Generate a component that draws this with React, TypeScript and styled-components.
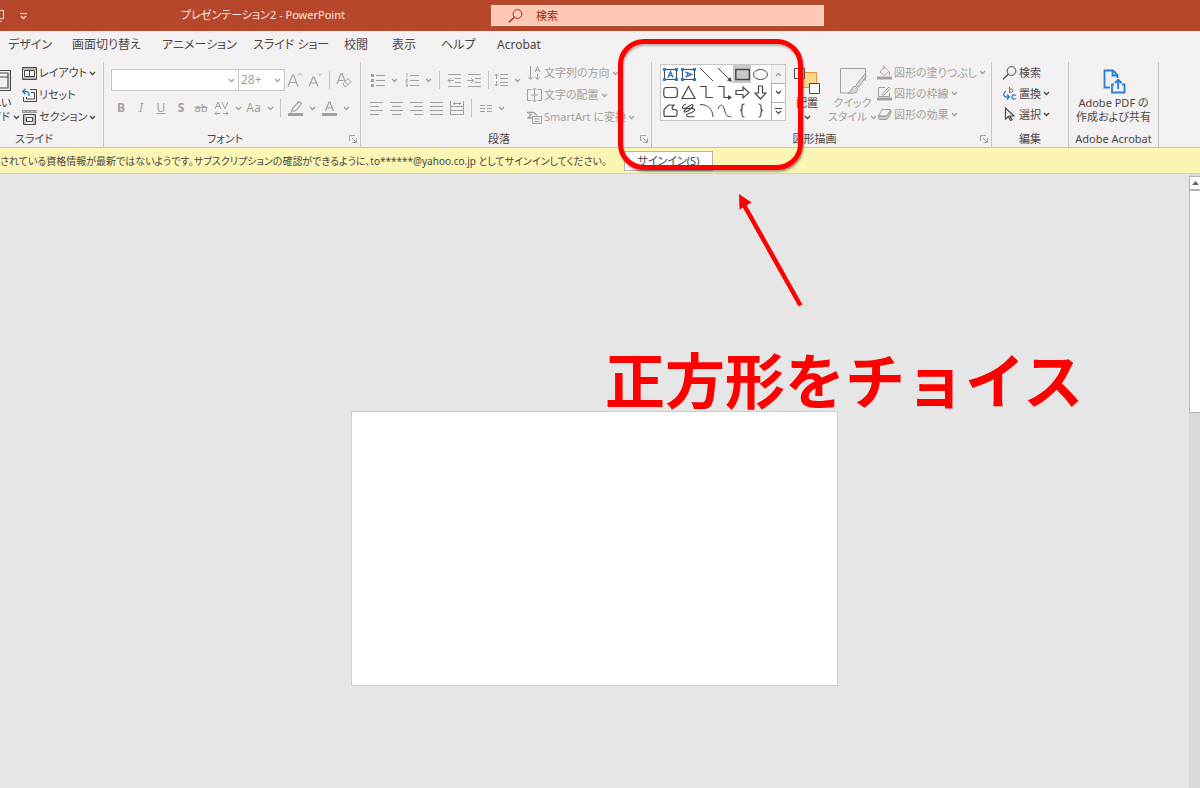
import React from "react";
import styled, { createGlobalStyle } from "styled-components";

const c = {
  brand: "#b7472a",
  ribbon: "#f3f1f1",
  ink: "#4a4846",
  off: "#a3a1a0",
  line: "#c8c6c4",
  blue: "#2b7cd3",
  red: "#ff0000",
};

const GlobalStyle = createGlobalStyle`
  *, *::before, *::after { box-sizing: border-box; }
  html, body { margin: 0; }
  body {
    font-family: "Noto Sans", "Noto Sans CJK JP", sans-serif;
    font-size: 11px;
    line-height: 14px;
    color: ${c.ink};
    font-feature-settings: "palt";
    overflow: hidden;
  }
  button, input, select { font: inherit; font-feature-settings: inherit; color: inherit; }
  svg { display: block; flex: none; }
`;

const Page = styled.div`
  position: relative;
  display: flex;
  flex-direction: column;
  min-height: 100vh;
`;

const TitleBar = styled.header`
  display: flex;
  align-items: center;
  height: 31px;
  background: ${c.brand};
  color: #fbe9e4;
`;
const QuickAccess = styled.div`
  display: flex;
  align-items: center;
  gap: 16px;
  width: 181px;
`;
const Title = styled.h1`
  width: 310px;
  margin: 0;
  padding-bottom: 2px;
  font-size: 11px;
  font-weight: 400;
  line-height: 14px;
  white-space: nowrap;
`;
const Search = styled.label`
  display: flex;
  align-items: center;
  gap: 13px;
  flex: 0 1 333px;
  height: 21px;
  padding-left: 16px;
  background: #fdc8b4;
  border: 1px solid #fbd9cd;
  color: #8f2f26;
`;
const SearchInput = styled.input`
  flex: 1;
  min-width: 0;
  padding: 0;
  border: 0;
  outline: 0;
  background: transparent;
  &::placeholder { color: #8f2f26; opacity: 1; }
`;

const Tabs = styled.nav`
  display: grid;
  grid-template-columns: 64px 90px 91px 91px 48px 49px 56px auto;
  justify-content: start;
  height: 28px;
  padding-left: 8px;
  background: ${c.ribbon};
`;
const Tab = styled.button`
  padding: 0;
  border: 0;
  background: none;
  font-size: 12px;
  text-align: left;
  white-space: nowrap;
`;

const Ribbon = styled.section`
  display: flex;
  padding-top: 3px;
  background: ${c.ribbon};
  border-bottom: 1px solid ${c.line};
`;
const Group = styled.div<{ $w: number }>`
  display: flex;
  flex-direction: column;
  gap: 3px;
  width: ${(p) => p.$w}px;
  border-right: 1px solid ${c.line};
`;
const GroupBody = styled.div<{ $pad?: number; $gap?: number; $center?: boolean }>`
  display: flex;
  gap: ${(p) => p.$gap ?? 0}px;
  height: 66px;
  padding-left: ${(p) => p.$pad ?? 0}px;
  justify-content: ${(p) => (p.$center ? "center" : "flex-start")};
`;
const GroupFooter = styled.div<{ $shift?: number }>`
  display: flex;
  align-items: center;
  height: 16px;
  padding-right: ${(p) => p.$shift ?? 0}px;
  white-space: nowrap;
`;
const GroupName = styled.span`
  flex: 1;
  text-align: center;
`;
const Launcher = styled.button`
  padding: 0 3px;
  border: 0;
  background: none;
  color: ${c.off};
`;

const Stack = styled.div<{ $row: number }>`
  display: grid;
  grid-auto-rows: ${(p) => p.$row}px;
  align-content: start;
  justify-items: start;
`;
const Command = styled.button<{ $off?: boolean }>`
  display: flex;
  align-items: center;
  gap: 2px;
  padding: 0;
  border: 0;
  background: none;
  color: ${(p) => (p.$off ? c.off : c.ink)};
  white-space: nowrap;
`;
const BigCommand = styled.button<{ $off?: boolean; $w: number }>`
  display: flex;
  flex-direction: column;
  align-items: center;
  width: ${(p) => p.$w}px;
  padding: 4px 0 0;
  border: 0;
  background: none;
  color: ${(p) => (p.$off ? c.off : c.ink)};
  white-space: nowrap;
`;
const BigIcon = styled.span`
  display: grid;
  place-items: center;
  height: 30px;
`;
const BigLine = styled.span`
  display: flex;
  align-items: center;
  gap: 3px;
  height: 14px;
`;
const Clipped = styled.div`
  display: flex;
  justify-content: flex-end;
  width: 20px;
  margin-right: 2px;
  overflow: hidden;
`;

const ToolRows = styled.div`
  display: flex;
  flex-direction: column;
  gap: 6px;
  padding-top: 7px;
`;
const ToolRow = styled.div`
  display: flex;
  align-items: center;
  height: 22px;
`;
const Tool = styled.button<{ $w?: number; $size?: number }>`
  display: flex;
  align-items: center;
  justify-content: center;
  gap: 6px;
  width: ${(p) => p.$w ?? 20}px;
  height: 22px;
  padding: 0;
  border: 0;
  background: none;
  color: ${c.off};
  font-size: ${(p) => p.$size ?? 12}px;
  line-height: 16px;
`;
const Rule = styled.span`
  width: 1px;
  height: 18px;
  margin: 0 4px;
  background: ${c.line};
`;
const SelectBox = styled.span<{ $w: number }>`
  display: grid;
  align-items: center;
  width: ${(p) => p.$w}px;
  height: 22px;
  margin-right: -1px;
  background: #fff;
  border: 1px solid ${c.line};
  color: ${c.off};
  & > * { grid-area: 1 / 1; }
  & > svg { justify-self: end; margin-right: 3px; pointer-events: none; }
`;
const Select = styled.select`
  appearance: none;
  width: 100%;
  padding: 0 2px;
  border: 0;
  outline: 0;
  background: transparent;
  font-size: 12px;
`;

const Gallery = styled.div`
  display: flex;
  height: 57px;
  margin-top: 2px;
  background: #fff;
  border: 1px solid ${c.line};
`;
const ShapeGrid = styled.div`
  display: grid;
  grid-template-columns: repeat(6, 18px);
  grid-template-rows: repeat(3, 18px);
  padding-right: 2px;
`;
const Shape = styled.button<{ $on?: boolean }>`
  display: grid;
  place-items: center;
  padding: 0;
  border: 0;
  background: ${(p) => (p.$on ? "#cbc9c8" : "none")};
`;
const Pager = styled.div`
  display: grid;
  grid-template-rows: repeat(3, 1fr);
  width: 14px;
`;
const PagerButton = styled.button<{ $off?: boolean }>`
  display: grid;
  place-items: center;
  padding: 0;
  border: 0;
  border-left: 1px solid ${(p) => (p.$off ? "#dedcda" : "#b0aeac")};
  border-top: ${(p) => (p.$off ? "0" : "1px solid #b0aeac")};
  background: ${(p) => (p.$off ? c.ribbon : "#fff")};
  color: ${(p) => (p.$off ? c.off : c.ink)};
`;

const MessageBar = styled.section`
  display: flex;
  align-items: center;
  height: 26px;
  background: #fcf6b4;
  border-bottom: 1px solid #dcd79c;
  white-space: nowrap;
`;
const Message = styled.p`
  width: 624px;
  margin: 0;
  font-size: 10px;
`;
const SignIn = styled.button`
  width: 89px;
  height: 20px;
  padding: 0;
  background: #fdfdfd;
  border: 1px solid #b5b3b1;
`;

const Workspace = styled.main`
  display: flex;
  flex: 1;
  background: #e6e6e6;
`;
const Canvas = styled.div`
  flex: 1;
  padding-top: 237px;
`;
const Slide = styled.div`
  width: 41%;
  aspect-ratio: 487 / 275;
  margin: 0 auto;
  background: #fff;
  border: 1px solid #cfcfcf;
`;
const ScrollBar = styled.div`
  width: 11px;
  padding-top: 2px;
  background: #dadada;
`;
const ScrollUp = styled.button`
  display: grid;
  place-items: center;
  width: 100%;
  height: 14px;
  padding: 0;
  background: #fff;
  border: 1px solid #b4b4b4;
  border-right: 0;
`;
const ScrollThumb = styled.div`
  height: 223px;
  background: #fff;
  border: 1px solid #b4b4b4;
  border-right: 0;
`;

const Highlight = styled.div`
  position: absolute;
  left: 618px;
  top: 39px;
  width: 185px;
  height: 131px;
  border: 5px solid ${c.red};
  border-radius: 26px;
  box-shadow: 1px 2px 2px rgba(0, 0, 0, 0.35), inset 1px 2px 2px rgba(0, 0, 0, 0.25);
  pointer-events: none;
`;
const Arrow = styled.svg`
  position: absolute;
  left: 736px;
  top: 192px;
  pointer-events: none;
`;
const Caption = styled.p`
  position: absolute;
  left: 605px;
  top: 348px;
  margin: 0;
  color: ${c.red};
  font-family: "Noto Sans CJK JP", sans-serif;
  font-feature-settings: normal;
  font-size: 60px;
  font-weight: 700;
  line-height: 60px;
  white-space: nowrap;
`;

type IconProps = { w: number; h: number; children: React.ReactNode };
const Icon = ({ w, h, children }: IconProps) => (
  <svg width={w} height={h} viewBox={`0 0 ${w} ${h}`} fill="none" stroke="currentColor" aria-hidden="true">
    {children}
  </svg>
);

const Chevron = ({ up }: { up?: boolean }) => (
  <Icon w={7} h={5}>
    <path d={up ? "M1 4l2.500-2.500L6 4" : "M1 1l2.500 2.500L6 1"} strokeWidth="1.300" />
  </Icon>
);
const LauncherIcon = () => (
  <Icon w={8} h={8}>
    <path d="M.5 6V.5H6M3 3l4 4M7.500 3.500v4h-4" />
  </Icon>
);
const SearchIcon = () => (
  <Icon w={15} h={14}>
    <circle cx="9.500" cy="5" r="4.400" />
    <path d="M6.300 8.200L1 13.200" strokeWidth="1.300" />
  </Icon>
);
const LayoutIcon = () => (
  <Icon w={15} h={13}>
    <path d="M.5.5h14v12H.5z" />
    <path d="M2.500 3.500h10v6h-10zM7.500 3.500v6" />
    <path d="M1 2h13M1 11h13" strokeOpacity=".35" strokeWidth="2" />
  </Icon>
);
const ResetIcon = () => (
  <Icon w={15} h={14}>
    <path d="M8 1.500h6.500v12H1.500V9M9 4.500h3.500v6.500h-8V9" />
    <path d="M.8 3.500h3.500a2.500 2.500 0 0 1 2.500 3V8M3.500.8L.8 3.500l2.700 2.700" stroke={c.blue} strokeWidth="1.400" />
  </Icon>
);
const SectionIcon = () => (
  <Icon w={15} h={15}>
    <path d="M0 1.500h15" stroke="#9b9997" strokeWidth="3" />
    <path d="M1 1.500h14" stroke="#f0c878" strokeDasharray="2 2" />
    <path d="M1.500 4.500h12v10h-12zM4.500 7.500h6v4h-6z" />
    <path d="M3 5v9M12 5v9" strokeOpacity=".3" strokeWidth="2" />
  </Icon>
);
const NewSlideIcon = () => (
  <Icon w={30} h={22}>
    <path d="M.5.5h29v20H.5zM3 3h24v15H3zM3 7h24" strokeWidth="1.200" />
  </Icon>
);
const lines = (items: [number, number, number][]) => items.map(([x1, x2, y]) => `M${x1} ${y}H${x2}`).join("");
const LinesIcon = ({ items, w = 14, h = 14, extra }: { items: [number, number, number][]; w?: number; h?: number; extra?: React.ReactNode }) => (
  <Icon w={w} h={h}>
    <path d={lines(items)} />
    {extra}
  </Icon>
);

const shapes: { name: string; on?: boolean; art: React.ReactNode }[] = [
  {
    name: "テキスト ボックス",
    art: (
      <>
        <path d="M1.500 2.500h12v10h-12z" />
        <path d="M5 10.500L7.500 4.500 10 10.500M6 8.500h3" stroke={c.blue} strokeWidth="1.400" />
        <path d="M0 1h3v3H0zM12 1h3v3h-3zM0 11h3v3H0zM12 11h3v3h-3z" fill={c.blue} stroke="none" />
      </>
    ),
  },
  {
    name: "縦書きテキスト ボックス",
    art: (
      <>
        <path d="M1.500 2.500h12v10h-12z" />
        <path d="M4.500 5L10.500 7.500 4.500 10M6.500 6v3" stroke={c.blue} strokeWidth="1.400" />
        <path d="M0 1h3v3H0zM12 1h3v3h-3zM0 11h3v3H0zM12 11h3v3h-3z" fill={c.blue} stroke="none" />
      </>
    ),
  },
  { name: "線", art: <path d="M1 1l13 13" /> },
  {
    name: "線矢印",
    art: (
      <>
        <path d="M1 1l12 12" />
        <path d="M15 15l-5-1.500 3.500-3.500z" fill="currentColor" stroke="none" />
      </>
    ),
  },
  { name: "正方形/長方形", on: true, art: <path d="M.8 2.500h13.500v10H.8z" strokeWidth="1.400" /> },
  { name: "楕円", art: <ellipse cx="7.500" cy="7.500" rx="7" ry="5" /> },
  { name: "四角形: 角を丸くする", art: <rect x=".8" y="2.500" width="13.500" height="10" rx="2.500" strokeWidth="1.200" /> },
  { name: "二等辺三角形", art: <path d="M7.500 1.500L14 13.500H1z" strokeWidth="1.200" /> },
  { name: "コネクタ: カギ線", art: <path d="M1 1.500h6v11h7" strokeWidth="1.200" /> },
  {
    name: "コネクタ: カギ線矢印",
    art: (
      <>
        <path d="M1 1.500h6v11h5" strokeWidth="1.200" />
        <path d="M15 12.500L11 10v5z" fill="currentColor" stroke="none" />
      </>
    ),
  },
  { name: "矢印: 右", art: <path d="M1 5.500h7V2l6 5.500L8 13V9.500H1z" strokeWidth="1.200" /> },
  { name: "矢印: 下", art: <path d="M5.500 1v7H2l5.500 6L13 8H9.500V1z" strokeWidth="1.200" /> },
  {
    name: "フリーフォーム: 図形",
    art: <path d="M1 12V6.500L5.500 2H11C9.500 3.500 8.500 5 9.500 6s3 .3 4.500 1.500v4c0 1-.7 1.800-1.800 1.800H1.800c-.5 0-.8-.5-.8-1.300z" strokeWidth="1.200" />,
  },
  {
    name: "フリーフォーム: フリーハンド",
    art: <path d="M5 1C2 2 .5 4.500 2 5.500S8 3 10 2s3 .5 1 2.500-5 4.500-7 4.500-.5-3 3-3.500 8 0 6 2.500-7 2-7.500 4 4.500 2 8 1.500" strokeWidth="1.100" />,
  },
  { name: "円弧", art: <path d="M1 1.500c8 0 12.500 4.500 13 12.500" /> },
  { name: "曲線", art: <path d="M1 6C3 .5 6 1 7.500 7s3 7 6.500 6.500" /> },
  { name: "左中かっこ", art: <path d="M9.500 1C7 1 7 2 7 4v1.500c0 1.200-.8 2-2 2 1.200 0 2 .8 2 2V11c0 2 0 3 2.500 3" strokeWidth="1.200" /> },
  { name: "右中かっこ", art: <path d="M5.500 1C8 1 8 2 8 4v1.500c0 1.200.8 2 2 2-1.200 0-2 .8-2 2V11c0 2 0 3-2.500 3" strokeWidth="1.200" /> },
];

const tabs = ["デザイン", "画面切り替え", "アニメーション", "スライド ショー", "校閲", "表示", "ヘルプ", "Acrobat"];

const Footer = ({ name, launcher, shift }: { name: string; launcher?: boolean; shift?: number }) => (
  <GroupFooter $shift={shift}>
    <GroupName>{name}</GroupName>
    {launcher && (
      <Launcher aria-label={`${name}の詳細`}>
        <LauncherIcon />
      </Launcher>
    )}
  </GroupFooter>
);

const SlideGroup = () => (
  <Group $w={104}>
    <GroupBody>
      <Clipped>
        <BigCommand $w={52} aria-label="新しいスライド">
          <BigIcon><NewSlideIcon /></BigIcon>
          <BigLine>新しい</BigLine>
          <BigLine>スライド<Chevron /></BigLine>
        </BigCommand>
      </Clipped>
      <Stack $row={22}>
        <Command><LayoutIcon />レイアウト<Chevron /></Command>
        <Command><ResetIcon />リセット</Command>
        <Command><SectionIcon />セクション<Chevron /></Command>
      </Stack>
    </GroupBody>
    <Footer name="スライド" shift={35} />
  </Group>
);

const FontGroup = () => (
  <Group $w={257}>
    <GroupBody $pad={7}>
      <ToolRows>
        <ToolRow>
          <SelectBox $w={128}>
            <Select aria-label="フォント"><option /></Select>
            <Chevron />
          </SelectBox>
          <SelectBox $w={47}>
            <Select aria-label="フォント サイズ"><option>28+</option></Select>
            <Chevron />
          </SelectBox>
          <Tool $w={21} aria-label="フォント サイズの拡大">
            <Icon w={16} h={16}><path d="M1 14.500L5.500 3h1L11 14.500M2.500 10.500h7" strokeWidth="1.200" /><path d="M11 3.500l2-2 2 2" /></Icon>
          </Tool>
          <Tool $w={20} aria-label="フォント サイズの縮小">
            <Icon w={16} h={16}><path d="M2 14.500L6 5h1l4 9.500M3.500 11h6" strokeWidth="1.200" /><path d="M11 1.500l2 2 2-2" /></Icon>
          </Tool>
          <Rule />
          <Tool $w={20} aria-label="書式のクリア">
            <Icon w={16} h={16}><path d="M1 12L5 1.500h1L9 9M2.500 8.500h5" strokeWidth="1.200" /><path d="M7 11.500l5-5 3 3-5 5H8.500zM9 9.500l3 3" /></Icon>
          </Tool>
        </ToolRow>
        <ToolRow>
          <Tool aria-label="太字"><b>B</b></Tool>
          <Tool aria-label="斜体"><i>I</i></Tool>
          <Tool aria-label="下線"><u>U</u></Tool>
          <Tool aria-label="文字の影"><b>S</b></Tool>
          <Tool aria-label="取り消し線" $size={11}><s>ab</s></Tool>
          <Tool $w={33} aria-label="文字の間隔">
            <Icon w={15} h={15}>
              <path d="M1 8l3-7 3 7M2 5.500h4M8 1l3 7 3-7" />
              <path d="M1 12.500h5M9 12.500h5M3 10.500l-2 2 2 2M12 10.500l2 2-2 2" />
            </Icon>
            <Chevron />
          </Tool>
          <Tool $w={32}><span>Aa</span><Chevron /></Tool>
          <Rule />
          <Tool $w={34} aria-label="蛍光ペンの色">
            <Icon w={15} h={16}>
              <path d="M4.500 8.500L11 1.500l2.500 2L7.500 11H4l-1 1.500z" strokeWidth="1.200" />
              <path d="M0 14.500h15" strokeWidth="3" />
            </Icon>
            <Chevron />
          </Tool>
          <Tool $w={34} aria-label="フォントの色">
            <Icon w={15} h={16}>
              <path d="M3.500 11l3.500-9h1l3.500 9M5 8h5" strokeWidth="1.200" />
              <path d="M0 14.500h15" strokeWidth="3" />
            </Icon>
            <Chevron />
          </Tool>
        </ToolRow>
      </ToolRows>
    </GroupBody>
    <Footer name="フォント" launcher />
  </Group>
);

const ParagraphGroup = () => (
  <Group $w={291}>
    <GroupBody $pad={6} $gap={6}>
      <ToolRows>
        <ToolRow>
          <Tool $w={34} aria-label="箇条書き">
            <LinesIcon items={[[5, 14, 2.5], [5, 14, 7.5], [5, 14, 12.5]]} extra={<path d="M0 2.500h3M0 7.500h3M0 12.500h3" strokeWidth="3" />} />
            <Chevron />
          </Tool>
          <Tool $w={34} aria-label="段落番号">
            <LinesIcon items={[[5, 14, 2.5], [5, 14, 7.5], [5, 14, 12.5]]} extra={<path d="M1 .5h1V4M.5 6h2v1.500H1V9h2M.5 11h2v3h-2M1 12.500h1" strokeWidth=".8" />} />
            <Chevron />
          </Tool>
          <Rule />
          <Tool aria-label="インデントを減らす">
            <LinesIcon items={[[1, 14, 1.5], [8, 14, 5.5], [8, 14, 9.5], [1, 14, 13.5]]} extra={<path d="M1 7.500h6M3.500 5L1 7.500 3.500 10" />} />
          </Tool>
          <Tool aria-label="インデントを増やす">
            <LinesIcon items={[[1, 14, 1.5], [8, 14, 5.5], [8, 14, 9.5], [1, 14, 13.5]]} extra={<path d="M0 7.500h6M4 5l2.500 2.500L4 10" />} />
          </Tool>
          <Rule />
          <Tool $w={28} aria-label="行間">
            <LinesIcon items={[[6, 14, 1.5], [6, 14, 5.5], [6, 14, 9.5], [6, 14, 12.5]]} extra={<path d="M2.500 1v5M2.500 8v5M.5 3l2-2 2 2M.5 11l2 2 2-2" />} />
            <Chevron />
          </Tool>
        </ToolRow>
        <ToolRow>
          <Tool aria-label="左揃え"><LinesIcon items={[[0, 13, 1.5], [0, 9, 5.5], [0, 13, 9.5], [0, 9, 13.5]]} /></Tool>
          <Tool aria-label="中央揃え"><LinesIcon items={[[0, 13, 1.5], [2, 11, 5.5], [0, 13, 9.5], [2, 11, 13.5]]} /></Tool>
          <Tool aria-label="右揃え"><LinesIcon items={[[0, 13, 1.5], [4, 13, 5.5], [0, 13, 9.5], [4, 13, 13.5]]} /></Tool>
          <Tool aria-label="両端揃え"><LinesIcon items={[[0, 13, 1.5], [0, 13, 5.5], [0, 13, 9.5], [0, 13, 13.5]]} /></Tool>
          <Tool aria-label="均等割り付け">
            <LinesIcon items={[[3, 11, 2.5], [1, 13, 5.5], [1, 13, 9.5], [0, 14, 13.5]]} extra={<path d="M.5 0v14M13.500 0v14M4.500 1v3M9.500 1v3" />} />
          </Tool>
          <Rule />
          <Tool $w={32} aria-label="段組み">
            <LinesIcon w={12} items={[[0, 5, 4.5], [7, 12, 4.5], [0, 5, 7.5], [7, 12, 7.5], [0, 5, 10.5], [7, 12, 10.5]]} />
            <Chevron />
          </Tool>
        </ToolRow>
      </ToolRows>
      <Stack $row={22}>
        <Command $off>
          <Icon w={15} h={15}><path d="M3.500 0v13M1 11l2.500 2.500L6 11M8 6l2.500-5.500L13 6M9 4h3M10.500 8v5.500M8 11l2.500 2.500L13 11" /></Icon>
          文字列の方向<Chevron />
        </Command>
        <Command $off>
          <Icon w={15} h={15}><path d="M4 1.500H.5v11H4M11 1.500h3.500v11H11M7.500 0v14M4 7h7M5.500 2l2-2 2 2M5.500 12l2 2 2-2" /></Icon>
          文字の配置<Chevron />
        </Command>
        <Command $off>
          <Icon w={15} h={13}><path d="M0 1.500h7l3 3M1 1l3 3-3 3h4" strokeWidth="1.300" /><path d="M5.500 5.500h9v7h-9zM7.500 8h5M7.500 10.500h5" /></Icon>
          SmartArt に変換<Chevron />
        </Command>
      </Stack>
    </GroupBody>
    <Footer name="段落" launcher />
  </Group>
);

const DrawingGroup = () => (
  <Group $w={340}>
    <GroupBody $pad={8}>
      <Gallery>
        <ShapeGrid>
          {shapes.map((s) => (
            <Shape key={s.name} $on={s.on} aria-label={s.name}>
              <Icon w={15} h={15}>{s.art}</Icon>
            </Shape>
          ))}
        </ShapeGrid>
        <Pager>
          <PagerButton $off aria-label="前の行"><Chevron up /></PagerButton>
          <PagerButton aria-label="次の行"><Chevron /></PagerButton>
          <PagerButton aria-label="その他">
            <Icon w={7} h={8}><path d="M0 1.500h7M1 4l2.500 2.500L6 4" strokeWidth="1.200" /></Icon>
          </PagerButton>
        </Pager>
      </Gallery>
      <BigCommand $w={42}>
        <BigIcon>
          <Icon w={26} h={26}>
            <path d="M7.500 4.500h15v15h-15z" fill="#fbd68a" stroke="#e8913a" />
            <path d="M.5.5h10v10H.5z" fill={c.ribbon} />
            <path d="M15.500 15.500h10v10h-10z" fill="#fff" />
          </Icon>
        </BigIcon>
        <BigLine>配置</BigLine>
        <BigLine><Chevron /></BigLine>
      </BigCommand>
      <BigCommand $off $w={49}>
        <BigIcon>
          <Icon w={28} h={28}>
            <path d="M10 26H1.500V1.500h25V14" />
            <path d="M26.500 6L17 18l2.500 2.500L27 10zM16 19c-3 0-3 5-7 7 5 1 10 0 10-4z" fill="currentColor" fillOpacity=".35" />
          </Icon>
        </BigIcon>
        <BigLine>クイック</BigLine>
        <BigLine>スタイル<Chevron /></BigLine>
      </BigCommand>
      <Stack $row={21}>
        <Command $off>
          <Icon w={15} h={15}><path d="M3 7l4.500-5L12 6.500 7.500 10.500zM7 0v4M12.500 7v3" /><path d="M0 13h15" strokeWidth="3" /></Icon>
          図形の塗りつぶし<Chevron />
        </Command>
        <Command $off>
          <Icon w={15} h={15}><path d="M8 1.500H1.500v9h11V7" /><path d="M5 8.500L12 1l1.500 1.500L7 9z" /><path d="M0 13h15" strokeWidth="3" /></Icon>
          図形の枠線<Chevron />
        </Command>
        <Command $off>
          <Icon w={15} h={15}><path d="M5 2.500h8.500L10 9H1.500z" /><path d="M1.500 9v2.500l1 1H10l4-6.500V3L10 9H1.500" fill="currentColor" fillOpacity=".5" /></Icon>
          図形の効果<Chevron />
        </Command>
      </Stack>
    </GroupBody>
    <Footer name="図形描画" launcher />
  </Group>
);

const EditGroup = () => (
  <Group $w={77}>
    <GroupBody $pad={10}>
      <Stack $row={21}>
        <Command><SearchIcon />検索</Command>
        <Command>
          <Icon w={15} h={15}>
            <path d="M7.500 1v6M7.500 4.500c0-2 3.500-2 3.500 0s-3.500 2.500-3.500.5" stroke="#c0504d" />
            <path d="M14 9.500c-3-1.500-4 0-4 1.500s1 3 4 1.500M4 5C1 6.500 1 10 3.500 11H7M5 8.500L7.500 11 5 13.500" stroke={c.blue} strokeWidth="1.300" />
          </Icon>
          置換<Chevron />
        </Command>
        <Command>
          <Icon w={15} h={15}><path d="M3.500 1v11l3-2.500 2 4 1.500-.8-2-3.700h4z" strokeWidth="1.200" /></Icon>
          選択<Chevron />
        </Command>
      </Stack>
    </GroupBody>
    <Footer name="編集" />
  </Group>
);

const AcrobatGroup = () => (
  <Group $w={90}>
    <GroupBody $center>
      <BigCommand $w={80}>
        <BigIcon>
          <Icon w={24} h={25}>
            <g stroke={c.blue} strokeWidth="1.800">
              <path d="M8 18.500H2.500V1.500H11l4.500 4.500V9M10.500 2v4.500h5" />
              <path d="M12 15.500H10v8h12.500v-8h-2.500M16.200 20v-8.500M13 14l3.200-3.200L19.500 14" />
            </g>
          </Icon>
        </BigIcon>
        <BigLine>Adobe PDF の</BigLine>
        <BigLine>作成および共有</BigLine>
      </BigCommand>
    </GroupBody>
    <Footer name="Adobe Acrobat" />
  </Group>
);

export default function App() {
  return (
    <Page>
      <GlobalStyle />
      <TitleBar>
        <QuickAccess>
          <Icon w={4} h={14}><path d="M0 1.500h3.500v8H0M0 13l2-1.500" /></Icon>
          <Icon w={7} h={8}><path d="M0 1.500h7M1 4l2.500 2.500L6 4" strokeWidth="1.200" /></Icon>
        </QuickAccess>
        <Title>プレゼンテーション2 - PowerPoint</Title>
        <Search>
          <SearchIcon />
          <SearchInput type="text" placeholder="検索" aria-label="検索" />
        </Search>
      </TitleBar>
      <Tabs>
        {tabs.map((t) => (
          <Tab key={t}>{t}</Tab>
        ))}
      </Tabs>
      <Ribbon>
        <SlideGroup />
        <FontGroup />
        <ParagraphGroup />
        <DrawingGroup />
        <EditGroup />
        <AcrobatGroup />
      </Ribbon>
      <MessageBar>
        <Message>
          されている資格情報が最新ではないようです。サブスクリプションの確認ができるように、to******@yahoo.co.jp としてサインインしてください。
        </Message>
        <SignIn>サインイン(S)</SignIn>
      </MessageBar>
      <Workspace>
        <Canvas>
          <Slide />
        </Canvas>
        <ScrollBar>
          <ScrollUp aria-label="上へスクロール">
            <Icon w={7} h={4}><path d="M0 4l3.500-4L7 4z" fill="#666" stroke="none" /></Icon>
          </ScrollUp>
          <ScrollThumb />
        </ScrollBar>
      </Workspace>
      <Highlight />
      <Arrow width="68" height="118" viewBox="0 0 68 118" aria-hidden="true">
        <path d="M8 13L64.500 113.500" stroke={c.red} strokeWidth="4.500" />
        <path d="M3 2l12.500 8.500-12 7z" fill={c.red} />
      </Arrow>
      <Caption>正方形をチョイス</Caption>
    </Page>
  );
}
